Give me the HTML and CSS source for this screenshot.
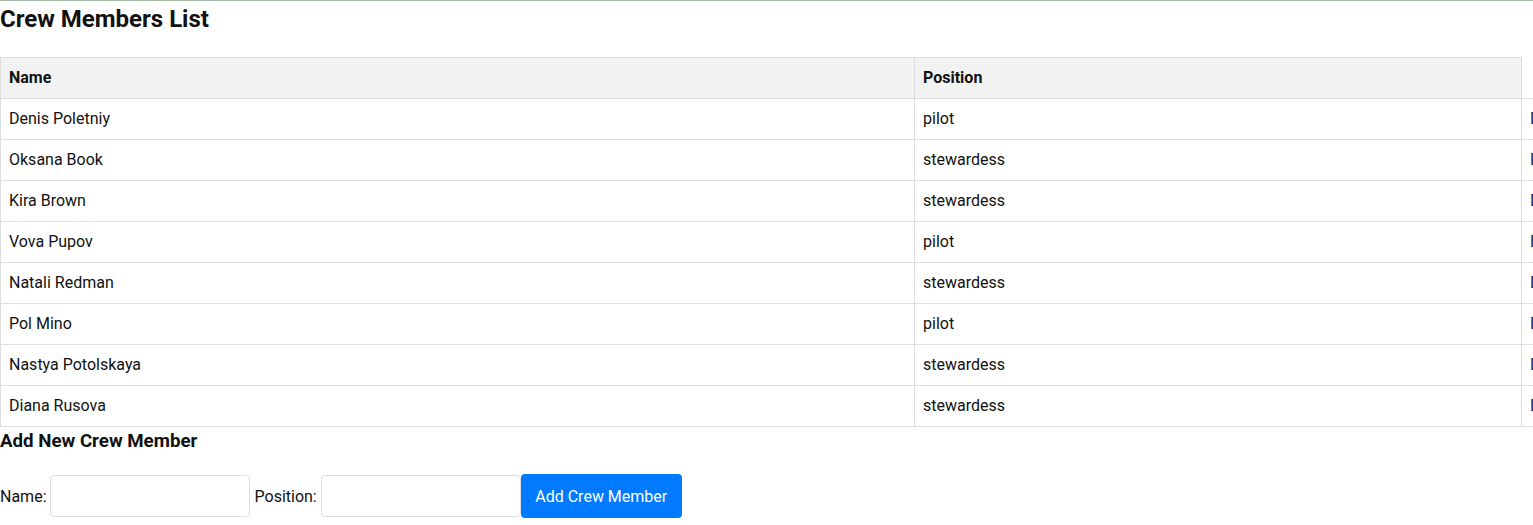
FILE: index.html
```html
<!DOCTYPE html>
<html>
<head>
<meta charset="utf-8">
<link rel="stylesheet" href="styles.css">
</head>
<body>
<div class="page">
  <h2 class="title">Crew Members List</h2>
  <table class="crew">
    <thead>
      <tr><th class="c-name">Name</th><th class="c-pos">Position</th><th class="c-act"></th></tr>
    </thead>
    <tbody>
      <tr><td>Denis Poletniy</td><td>pilot</td><td class="act">Delete</td></tr>
      <tr><td>Oksana Book</td><td>stewardess</td><td class="act">Delete</td></tr>
      <tr><td>Kira Brown</td><td>stewardess</td><td class="act">Delete</td></tr>
      <tr><td>Vova Pupov</td><td>pilot</td><td class="act">Delete</td></tr>
      <tr><td>Natali Redman</td><td>stewardess</td><td class="act">Delete</td></tr>
      <tr><td>Pol Mino</td><td>pilot</td><td class="act">Delete</td></tr>
      <tr><td>Nastya Potolskaya</td><td>stewardess</td><td class="act">Delete</td></tr>
      <tr><td>Diana Rusova</td><td>stewardess</td><td class="act">Delete</td></tr>
    </tbody>
  </table>
  <h3 class="subtitle">Add New Crew Member</h3>
  <form class="add-form">
    <label class="lbl">Name:</label>
    <input class="field" type="text">
    <label class="lbl lbl-pos">Position:</label>
    <input class="field" type="text">
    <button class="btn" type="button">Add Crew Member</button>
  </form>
</div>
</body>
</html>
```
FILE: styles.css
```css
html, body {
  margin: 0;
  padding: 0;
  overflow: hidden;
}
body {
  font-family: Roboto, "Liberation Sans", sans-serif;
  color: #111;
  background: #fff;
  border-top: 1px solid #a3b9a3;
}
.page {
  width: 1700px;
}
.title {
  font-size: 24px;
  font-weight: 700;
  line-height: 36px;
  margin: 0 0 20px 0;
}
.crew {
  border-collapse: collapse;
  width: 1640px;
  font-size: 16px;
}
.crew th, .crew td {
  border: 1px solid #ddd;
  padding: 8px;
  line-height: 24px;
  text-align: left;
}
.crew th {
  background: #f2f2f2;
  font-weight: 700;
}
.c-name { width: 897px; }
.c-pos { width: 590px; }
.crew th.c-act {
  background: #fff;
  border-top-color: #fff;
  border-right-color: #fff;
}
.act {
  color: #1a1a5e;
}
.subtitle {
  font-size: 18.7px;
  font-weight: 700;
  line-height: 27px;
  padding-top: 1px;
  margin: 0 0 19px 0;
}
.add-form {
  display: flex;
  align-items: center;
  font-size: 16px;
}
.lbl {
  margin-right: 3px;
}
.lbl-pos {
  margin-left: 5px;
  margin-right: 4px;
}
.field {
  box-sizing: border-box;
  width: 200px;
  height: 42px;
  border: 1px solid #ddd;
  border-radius: 4px;
  padding: 10px;
  font-size: 16px;
  font-family: inherit;
}
.btn {
  box-sizing: border-box;
  margin-left: 0;
  height: 44px;
  width: 161px;
  background: #007bff;
  color: #fff;
  border: none;
  border-radius: 4px;
  font-size: 16px;
  font-family: inherit;
  padding: 0 12px;
}
```
